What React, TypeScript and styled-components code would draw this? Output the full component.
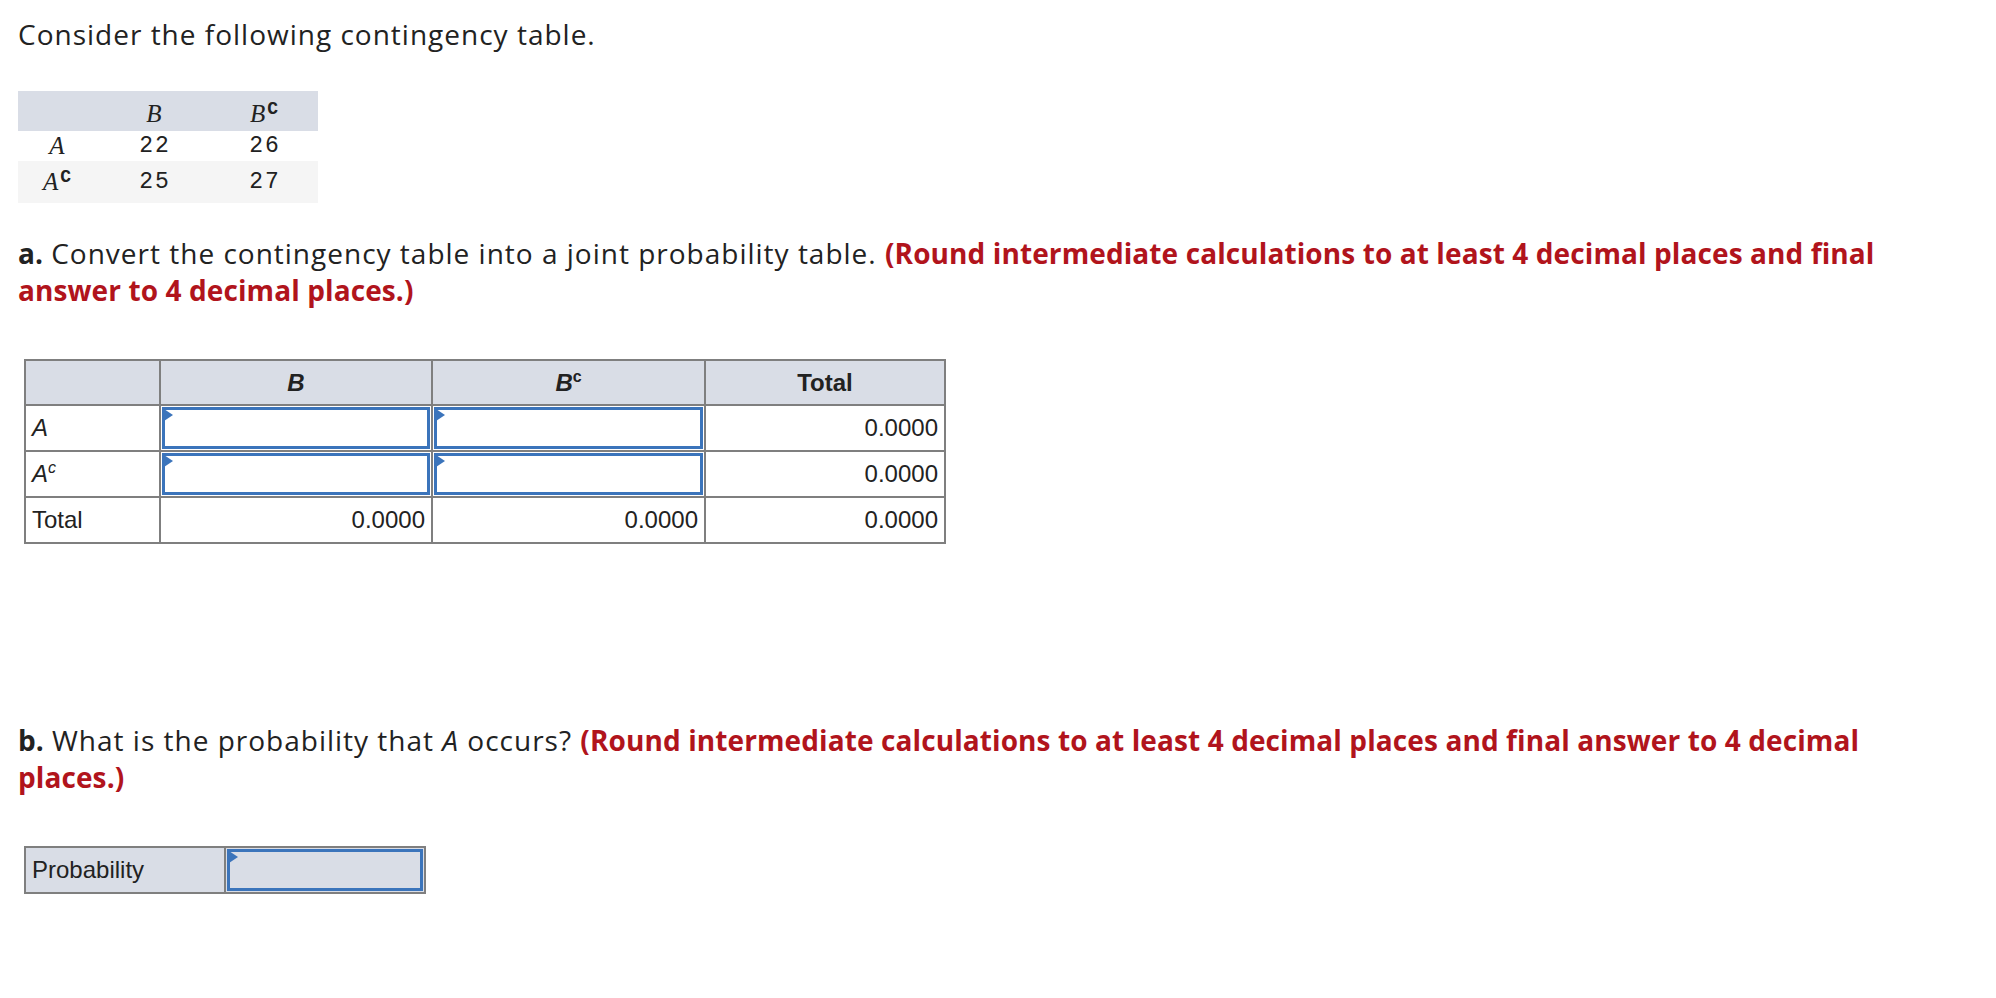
import React from 'react'
import styled, { createGlobalStyle } from 'styled-components'

const GlobalStyle = createGlobalStyle`
  body {
    margin: 0;
    background: #ffffff;
    color: #222222;
    font-family: "Open Sans", Lato, sans-serif;
  }
`

const Page = styled.div`
  padding: 16px 0 40px 18px;
  width: 1900px;
`

const Prose = styled.p<{ $gap?: number }>`
  margin: ${({ $gap }) => $gap || 0}px 0 0 0;
  font-size: 28px;
  line-height: 37px;
  letter-spacing: 1px;
  color: #222222;
`

const PartLabel = styled.b`
  font-weight: 700;
  letter-spacing: 0;
`

const Note = styled.b`
  font-weight: 700;
  letter-spacing: 0.1px;
  color: #b1141c;
`

const DataTable = styled.table`
  margin-top: 38px;
  border-collapse: collapse;
  width: 300px;
  color: #222222;

  th, td {
    padding: 0;
    text-align: center;
    font-family: "Liberation Mono", "DejaVu Sans Mono", monospace;
    font-size: 23px;
    letter-spacing: 2px;
  }
`

const DataHead = styled.tr`
  background: #d9dde6;
  height: 40px;

  th {
    font-weight: 400;
    padding-top: 6px;
  }
`

const DataRow = styled.tr<{ $shade?: boolean; $h: number }>`
  background: ${({ $shade }) => ($shade ? '#f5f5f5' : '#ffffff')};
  height: ${({ $h }) => $h}px;
`

const Sym = styled.i`
  font-style: italic;
  font-family: "Liberation Serif", serif;
  font-size: 25px;
`

const SymSup = styled.sup`
  font-style: normal;
  font-weight: 700;
  font-size: 18px;
  vertical-align: 8px;
  line-height: 0;
`

const Grid = styled.table`
  margin: 50px 0 0 6px;
  border-collapse: collapse;
  color: #222222;

  th, td {
    border: 2px solid #7f7f7f;
    padding: 0 6px;
    font-family: "Liberation Sans", Arial, sans-serif;
    font-size: 24px;
  }
`

const GridHead = styled.tr`
  background: #d9dde6;
  height: 45px;

  th {
    font-weight: 700;
    text-align: center;
  }
`

const GridRow = styled.tr`
  height: 46px;
`

const RowLabel = styled.td`
  text-align: left;
`

const NumCell = styled.td`
  text-align: right;
`

const EntryCell = styled.td`
  && {
    padding: 1px;
  }
`

const InputBox = styled.div<{ $shade?: boolean }>`
  position: relative;
  box-sizing: border-box;
  height: 42px;
  border: 3px solid #3b74bb;
  background: ${({ $shade }) => ($shade ? '#d9dde6' : '#ffffff')};

  &::before {
    content: '';
    position: absolute;
    top: -1px;
    left: -1px;
    border-top: 6px solid transparent;
    border-bottom: 6px solid transparent;
    border-left: 9px solid #3b74bb;
  }
`

const Sup = styled.sup`
  font-size: 16px;
  vertical-align: 9px;
  line-height: 0;
`

const ProbTable = styled(Grid)`
  background: #d9dde6;

  td {
    height: 42px;
  }
`

const App = () => (
  <>
    <GlobalStyle />
    <Page>
      <Prose>Consider the following contingency table.</Prose>

      <DataTable>
        <colgroup>
          <col style={{ width: 80 }} />
          <col style={{ width: 114 }} />
          <col style={{ width: 106 }} />
        </colgroup>
        <thead>
          <DataHead>
            <th />
            <th><Sym>B</Sym></th>
            <th><Sym>B</Sym><SymSup>C</SymSup></th>
          </DataHead>
        </thead>
        <tbody>
          <DataRow $h={30}>
            <td><Sym>A</Sym></td>
            <td>22</td>
            <td>26</td>
          </DataRow>
          <DataRow $h={42} $shade>
            <td><Sym>A</Sym><SymSup>C</SymSup></td>
            <td>25</td>
            <td>27</td>
          </DataRow>
        </tbody>
      </DataTable>

      <Prose $gap={32}>
        <PartLabel>a.</PartLabel> Convert the contingency table into a joint probability table.{' '}
        <Note>(Round intermediate calculations to at least 4 decimal places and final answer to 4 decimal places.)</Note>
      </Prose>

      <Grid>
        <colgroup>
          <col style={{ width: 135 }} />
          <col style={{ width: 272 }} />
          <col style={{ width: 273 }} />
          <col style={{ width: 240 }} />
        </colgroup>
        <thead>
          <GridHead>
            <th />
            <th><i>B</i></th>
            <th><i>B</i><Sup>c</Sup></th>
            <th>Total</th>
          </GridHead>
        </thead>
        <tbody>
          <GridRow>
            <RowLabel><i>A</i></RowLabel>
            <EntryCell><InputBox /></EntryCell>
            <EntryCell><InputBox /></EntryCell>
            <NumCell>0.0000</NumCell>
          </GridRow>
          <GridRow>
            <RowLabel><i>A</i><Sup><i>c</i></Sup></RowLabel>
            <EntryCell><InputBox /></EntryCell>
            <EntryCell><InputBox /></EntryCell>
            <NumCell>0.0000</NumCell>
          </GridRow>
          <GridRow>
            <RowLabel>Total</RowLabel>
            <NumCell>0.0000</NumCell>
            <NumCell>0.0000</NumCell>
            <NumCell>0.0000</NumCell>
          </GridRow>
        </tbody>
      </Grid>

      <Prose $gap={178}>
        <PartLabel>b.</PartLabel> What is the probability that <i>A</i> occurs?{' '}
        <Note>(Round intermediate calculations to at least 4 decimal places and final answer to 4 decimal places.)</Note>
      </Prose>

      <ProbTable>
        <colgroup>
          <col style={{ width: 200 }} />
          <col style={{ width: 200 }} />
        </colgroup>
        <tbody>
          <tr>
            <RowLabel>Probability</RowLabel>
            <EntryCell><InputBox $shade /></EntryCell>
          </tr>
        </tbody>
      </ProbTable>
    </Page>
  </>
)

export default App
